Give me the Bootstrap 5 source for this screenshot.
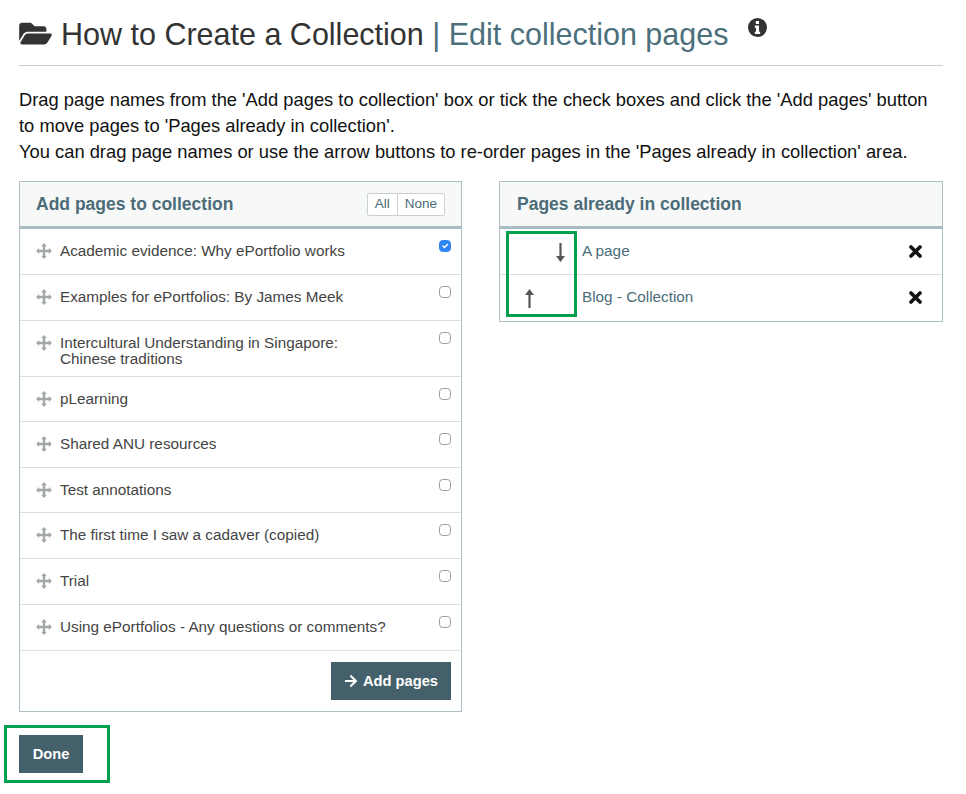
<!DOCTYPE html>
<html lang="en">
<head>
    <meta charset="UTF-8">
    <meta name="viewport" content="width=device-width, initial-scale=1.0">
    <title>Edit collection pages</title>
    <link href="https://cdn.jsdelivr.net/npm/bootstrap@5.3.0/dist/css/bootstrap.min.css" rel="stylesheet">
    <style>
        body { font-family: "Liberation Sans", Arial, sans-serif; color: #111; background: #fff; }
        .page-wrap { position: relative; width: 966px; height: 794px; padding: 0 23px 0 19px; overflow: hidden; }
        .title-bar { height: 66px; padding-top: 14px; border-bottom: 1px solid #c9d1d4; display: flex; align-items: flex-start; }
        .title-bar h1 { font-size: 30.5px; line-height: 40px; font-weight: 400; color: #333; margin: 0; white-space: nowrap; }
        .title-sub { color: #4c6f7c; }
        .title-folder { width: 33px; height: 29px; margin: 5px 9px 0 0; fill: #333; }
        .title-info { width: 19px; height: 19px; margin: 4px 0 0 20px; }
        .intro { font-size: 18.33px; line-height: 25.9px; margin: 21px 0 0; height: 94px; white-space: nowrap; }
        .panels { display: flex; justify-content: space-between; align-items: flex-start; }
        .coll-panel { border: 1px solid #aebfc5; border-radius: 0; background: #fff; }
        .panel-left { width: 443px; }
        .panel-right { width: 444px; }
        .coll-head { height: 47.4px; padding: 0 16px; background: #f7f9f9; border-bottom: 3px solid #a9bcc3; border-radius: 0 !important; display: flex; align-items: center; justify-content: space-between; }
        .panel-right .coll-head { padding-left: 17px; }
        .coll-head h2 { font-size: 17.5px; font-weight: 700; color: #4c6c78; margin: 0; }
        .mini-btns .btn { font-size: 13.5px; line-height: 20px; padding: 0 7px; height: 23px; color: #4c6c78; background: #fff; border-color: #c9d1d4; border-radius: 2px; }
        .page-row { display: flex; align-items: flex-start; min-height: 45.6px; padding: 14px 10px 9px 16px; border-color: #dbe1e3; font-size: 15.3px; line-height: 16px; color: #444; }
        .page-row span.name { flex: 1; }
        .move-ico { width: 16px; height: 16px; margin: 0 8px 0 0; fill: #a3a7a9; flex: none; }
        .page-check { width: 12px; height: 12px; margin: -3px 0 0; border: 1px solid #9a9fa3; border-radius: 3px; flex: none; }
        .page-check:checked { background-color: #2f86f2; border-color: #2f86f2; }
        .add-foot { display: flex; justify-content: flex-end; padding: 11px 10px 10.6px 0; }
        .slate-btn { background: #44606a; color: #fff; border: 0; border-radius: 0; font-size: 14.7px; font-weight: 700; height: 38px; display: inline-flex; align-items: center; justify-content: center; padding: 0; }
        .slate-btn:hover { background: #3a535c; color: #fff; }
        .btn-add { width: 120px; gap: 5px; }
        .btn-done { width: 64px; margin-top: 23px; }
        .btn-add svg { width: 14px; height: 14px; fill: #fff; }
        .order-row { display: flex; align-items: center; height: 45.6px; font-size: 15.3px; color: #4c6c78; padding: 0; border-color: #dbe1e3; }
        .arrow-slot { width: 82px; flex: none; position: relative; height: 20px; }
        .arrow-slot svg { position: absolute; width: 9px; height: 19px; top: 1px; fill: #555; }
        .order-row .name { flex: 1; }
        .del-ico { width: 13px; height: 13px; margin-right: 20px; stroke: #111; stroke-width: 3.6; stroke-linecap: round; flex: none; }
        .green-mark { position: absolute; border: 3.5px solid #00a04f; pointer-events: none; }
        .mark-arrows { left: 506px; top: 231px; width: 71px; height: 86px; }
        .mark-done { left: 4px; top: 725px; width: 106px; height: 58px; }
    </style>
</head>
<body>
    <div class="page-wrap">
        <!-- Заголовок -->
        <div class="title-bar">
            <svg class="title-folder" viewBox="0 0 576 512"><path d="M572.694 292.093L500.27 416.248A63.997 63.997 0 0 1 444.989 448H45.025c-18.523 0-30.064-20.093-20.731-36.093l72.424-124.155A64 64 0 0 1 152 256h399.964c18.523 0 30.064 20.093 20.73 36.093zM152 224h328v-48c0-26.51-21.49-48-48-48H272l-64-64H48C21.49 64 0 85.49 0 112v278.046l69.077-118.418C86.214 242.25 117.989 224 152 224z"/></svg>
            <h1>How to Create a Collection <span class="title-sub">| Edit collection pages</span></h1>
            <svg class="title-info" viewBox="0 0 20 20"><path fill="#333" fill-rule="evenodd" d="M10 0a10 10 0 1 0 0 20a10 10 0 0 0 0-20zM8.2 3.2h3.4v3H8.2zM7.2 8h4.4v6.6h1.2v2.2H7.2v-2.2h1.2v-4.4H7.2z"/></svg>
        </div>

        <p class="intro">Drag page names from the 'Add pages to collection' box or tick the check boxes and click the 'Add pages' button<br>to move pages to 'Pages already in collection'.<br>You can drag page names or use the arrow buttons to re-order pages in the 'Pages already in collection' area.</p>

        <div class="panels">
            <!-- Страницы для добавления -->
            <div class="card coll-panel panel-left">
                <div class="card-header coll-head">
                    <h2>Add pages to collection</h2>
                    <div class="btn-group mini-btns">
                        <button type="button" class="btn btn-sm">All</button>
                        <button type="button" class="btn btn-sm">None</button>
                    </div>
                </div>
                <div class="list-group list-group-flush border-bottom" id="add-list"></div>
                <div class="add-foot">
                    <button type="button" class="btn slate-btn btn-add">
                        <svg viewBox="0 0 448 512"><path d="M190.5 66.9l22.2-22.2c9.4-9.4 24.6-9.4 33.9 0L441 239c9.4 9.4 9.4 24.6 0 33.9L246.6 467.3c-9.4 9.4-24.6 9.4-33.9 0l-22.2-22.2c-9.5-9.5-9.3-25 .4-34.3L311.4 296H24c-13.3 0-24-10.7-24-24v-32c0-13.3 10.7-24 24-24h287.4L190.9 101.2c-9.8-9.3-10-24.8-.4-34.3z"/></svg>
                        Add pages
                    </button>
                </div>
            </div>

            <!-- Страницы в коллекции -->
            <div class="card coll-panel panel-right">
                <div class="card-header coll-head">
                    <h2>Pages already in collection</h2>
                </div>
                <div class="list-group list-group-flush">
                    <div class="list-group-item order-row">
                        <div class="arrow-slot"><svg style="left:56px" viewBox="0 0 9 19"><path d="M3.4 0h2.2v13H9l-4.5 6L0 13h3.4z"/></svg></div>
                        <span class="name">A page</span>
                        <svg class="del-ico" viewBox="0 0 13 13"><path d="M2 2l9 9M11 2l-9 9"/></svg>
                    </div>
                    <div class="list-group-item order-row">
                        <div class="arrow-slot"><svg style="left:25px" viewBox="0 0 9 19"><path d="M3.4 19h2.2V6H9L4.5 0L0 6h3.4z"/></svg></div>
                        <span class="name">Blog - Collection</span>
                        <svg class="del-ico" viewBox="0 0 13 13"><path d="M2 2l9 9M11 2l-9 9"/></svg>
                    </div>
                </div>
            </div>
        </div>

        <button type="button" class="btn slate-btn btn-done">Done</button>

        <div class="green-mark mark-arrows"></div>
        <div class="green-mark mark-done"></div>
    </div>

    <script src="https://cdn.jsdelivr.net/npm/bootstrap@5.3.0/dist/js/bootstrap.bundle.min.js"></script>
    <script>
        // Список страниц
        const pages = [
            ["Academic evidence: Why ePortfolio works", true],
            ["Examples for ePortfolios: By James Meek", false],
            ["Intercultural Understanding in Singapore:<br>Chinese traditions", false],
            ["pLearning", false],
            ["Shared ANU resources", false],
            ["Test annotations", false],
            ["The first time I saw a cadaver (copied)", false],
            ["Trial", false],
            ["Using ePortfolios - Any questions or comments?", false]
        ];
        const moveIcon = '<svg class="move-ico" viewBox="0 0 16 16"><path d="M8 0l3 3.2H9.2v3.6h3.6V5l3.2 3-3.2 3V9.2H9.2v3.6H11L8 16l-3-3.2h1.8V9.2H3.2V11L0 8l3.2-3v1.8h3.6V3.2H5z"/></svg>';
        document.getElementById('add-list').innerHTML = pages.map(page => `
            <label class="list-group-item page-row">
                ${moveIcon}
                <span class="name">${page[0]}</span>
                <input class="form-check-input page-check" type="checkbox" ${page[1] ? 'checked' : ''}>
            </label>
        `).join('');
    </script>
</body>
</html>
